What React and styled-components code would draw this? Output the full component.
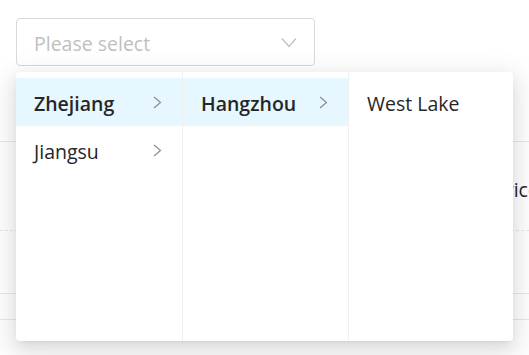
import styled, { createGlobalStyle } from "styled-components";

const GlobalStyle = createGlobalStyle`
  body {
    margin: 0;
    background: #fff;
    font-family: "Open Sans", "Noto Sans", sans-serif;
    color: #262626;
  }
`;

const columns = [
  [
    { label: "Zhejiang", active: true, more: true },
    { label: "Jiangsu", more: true },
  ],
  [{ label: "Hangzhou", active: true, more: true }],
  [{ label: "West Lake" }],
];

const Page = styled.div`
  position: relative;
  width: 529px;
  height: 355px;
  overflow: hidden;
  padding-top: 18px;
  box-sizing: border-box;
`;

const Select = styled.div`
  margin-left: 16px;
  width: 299px;
  height: 48px;
  box-sizing: border-box;
  border: 1px solid #d9d9d9;
  border-radius: 4px;
  display: flex;
  align-items: center;
  justify-content: space-between;
  padding: 0 17px 0 17px;
  background: #fff;
`;

const Placeholder = styled.span`
  font-size: 19.5px;
  color: #bfbfbf;
  padding-top: 3px;
`;

const Table = styled.div`
  margin-top: 11px;
`;

const TableRow = styled.div`
  height: ${(p) => p.$h}px;
  border-bottom: 1px ${(p) => (p.$dashed ? "dashed" : "solid")} #e8e8e8;
  display: flex;
  align-items: center;
  font-size: 19.5px;
`;

const Cell = styled.span`
  padding: 6px 0 0 ${(p) => p.$left}px;
  white-space: nowrap;
`;

const Dropdown = styled.div`
  position: absolute;
  top: 72px;
  left: 16px;
  width: 497px;
  height: 269px;
  display: flex;
  background: #fff;
  border-radius: 4px;
  box-shadow: 0 6px 16px 0 rgba(0, 0, 0, 0.08),
    0 3px 6px -4px rgba(0, 0, 0, 0.12), 0 9px 28px 8px rgba(0, 0, 0, 0.08);
  overflow: hidden;
`;

const Column = styled.ul`
  list-style: none;
  margin: 0;
  padding: 6px 0 0;
  width: 166px;
  box-sizing: border-box;
  & + & {
    border-left: 1px solid #f0f0f0;
  }
  &:last-child {
    width: 165px;
  }
`;

const Item = styled.li`
  height: 48px;
  box-sizing: border-box;
  display: flex;
  align-items: center;
  justify-content: space-between;
  padding: 0 20px 0 18px;
  font-size: 19.5px;
  font-weight: ${(p) => (p.$active ? 600 : 400)};
  background: ${(p) => (p.$active ? "#e6f7ff" : "transparent")};
  color: #262626;
`;

const Label = styled.span`
  padding-top: 3px;
`;

const Arrow = () => (
  <svg width="9" height="13" viewBox="0 0 9 13">
    <polyline
      points="1,1 7.5,6.5 1,12"
      fill="none"
      stroke="#8c8c8c"
      strokeWidth="1.2"
    />
  </svg>
);

const Chevron = () => (
  <svg width="16" height="11" viewBox="0 0 16 11">
    <polyline
      points="1,1.5 8,9.5 15,1.5"
      fill="none"
      stroke="#bfbfbf"
      strokeWidth="1.2"
    />
  </svg>
);

const App = () => {
  return (
    <Page>
      <GlobalStyle />
      <Select>
        <Placeholder>Please select</Placeholder>
        <Chevron />
      </Select>
      <Table>
        <TableRow $h={64} />
        <TableRow $h={88} $dashed>
          <Cell $left={494}>Price</Cell>
        </TableRow>
        <TableRow $h={62} />
        <TableRow $h={25} />
      </Table>
      <Dropdown>
        {columns.map((col, i) => (
          <Column key={i}>
            {col.map((item) => (
              <Item key={item.label} $active={item.active}>
                <Label>{item.label}</Label>
                {item.more && <Arrow />}
              </Item>
            ))}
          </Column>
        ))}
      </Dropdown>
    </Page>
  );
};

export default App;
